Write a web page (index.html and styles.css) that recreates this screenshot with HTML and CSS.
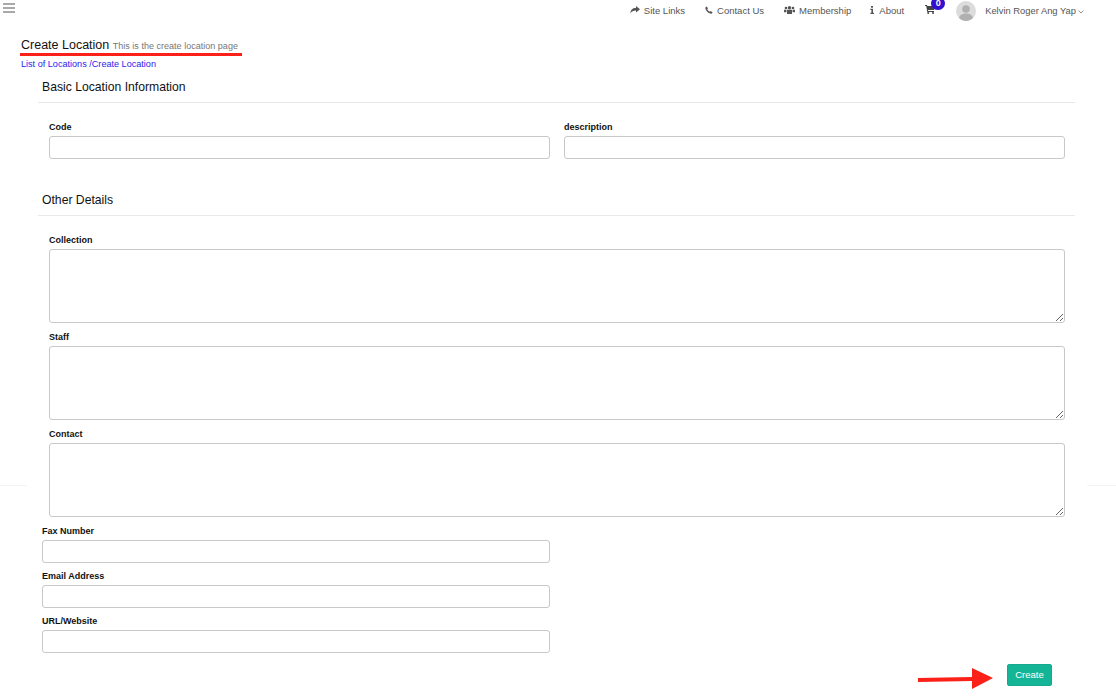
FILE: index.html
```html
<!DOCTYPE html>
<html lang="en">
<head>
<meta charset="utf-8">
<title>Create Location</title>
<link rel="stylesheet" href="styles.css">
</head>
<body>
<div class="edge-line"></div>
<header class="topbar">
  <svg class="burger" viewBox="0 0 12 10" width="12" height="10"><path d="M0 0h12v2H0zM0 4h12v2H0zM0 8h12v2H0z" fill="#a9a9a9"/></svg>
  <nav class="topnav">
    <a class="navitem"><svg class="ico" viewBox="0 0 10 8" width="10" height="8"><path d="M6 0l4 3.2L6 6.4V4.4C3.4 4.4 1.6 5 .4 7.6.4 4 2.4 2 6 2z" fill="#555"/></svg>Site Links</a>
    <a class="navitem"><svg class="ico" viewBox="0 0 8 8" width="8" height="8"><path d="M1.6.4L3 2.2 2.2 3.2C2.7 4.3 3.6 5.2 4.8 5.8L5.8 5 7.6 6.4C7.2 7.3 6.4 7.8 5.6 7.6 3 7 1 5 .4 2.4.3 1.500.8.800 1.600.4z" fill="#555"/></svg>Contact Us</a>
    <a class="navitem"><svg class="ico" viewBox="0 0 11 8" width="11" height="8"><g fill="#555"><circle cx="2" cy="2" r="1.300"/><circle cx="9" cy="2" r="1.300"/><circle cx="5.500" cy="1.700" r="1.700"/><path d="M0 3.800h2.400v2.400H0zM8.600 3.800H11v2.400H8.600zM3 3.800h5v4.200H3z"/></g></svg>Membership</a>
    <a class="navitem navitem-about"><svg class="ico" viewBox="0 0 4 8" width="4" height="8"><path d="M1 0h2v1.800H1zM.4 2.800H3v4h1V8H.4V6.800h1v-2.800h-1z" fill="#555"/></svg>About</a>
    <a class="cart"><svg viewBox="0 0 10 9" width="10" height="9"><path d="M0 0h2l.3 1H10L9 5H3l.2 1H9v1H2.300L1.200 1H0z" fill="#444"/><circle cx="3.200" cy="8" r="1" fill="#444"/><circle cx="8" cy="8" r="1" fill="#444"/></svg><span class="badge">0</span></a>
    <a class="user">
      <svg class="avatar" viewBox="0 0 20 20" width="20" height="20"><circle cx="10" cy="10" r="10" fill="#dcdcdc"/><circle cx="10" cy="8" r="3.800" fill="#b0b0b0"/><path d="M3 17c1-3.500 4-4.500 7-4.500s6 1 7 4.500c-2 2-4.500 3-7 3s-5-1-7-3z" fill="#b0b0b0"/></svg>
      <span class="user-name">Kelvin Roger Ang Yap</span>
      <svg class="caret" viewBox="0 0 6 4" width="6" height="4"><path d="M.5.5L3 3 5.500.5" fill="none" stroke="#777" stroke-width="0.800"/></svg>
    </a>
  </nav>
</header>

<main class="page">
  <div class="heading">
    <h1 class="title">Create Location <small class="subtitle">This is the create location page</small></h1>
    <div class="mark-line"></div>
    <p class="crumbs"><a>List of Locations</a> /<a>Create Location</a></p>
  </div>

  <form class="form">
    <section class="section">
      <h2 class="section-title">Basic Location Information</h2>
      <div class="grid-2">
        <div class="field"><label>Code</label><input type="text"></div>
        <div class="field"><label>description</label><input type="text"></div>
      </div>
    </section>

    <section class="section section-other">
      <h2 class="section-title">Other Details</h2>
      <div class="stack">
        <div class="field"><label>Collection</label><textarea></textarea></div>
        <div class="field"><label>Staff</label><textarea></textarea></div>
        <div class="field"><label>Contact</label><textarea></textarea></div>
      </div>
    </section>

    <div class="contact-fields">
      <div class="field"><label>Fax Number</label><input type="text"></div>
      <div class="field"><label>Email Address</label><input type="text"></div>
      <div class="field"><label>URL/Website</label><input type="text"></div>
    </div>

    <div class="actions">
      <svg class="arrow" viewBox="0 0 76 21" width="76" height="21"><path d="M0 10L54 9V0L75 10 54 21V13L0 14z" fill="#fb2018"/></svg>
      <button class="btn" type="button">Create</button>
    </div>
  </form>
</main>
</body>
</html>
```
FILE: styles.css
```css
* { box-sizing: border-box; }
html, body { margin: 0; padding: 0; }
body {
  position: relative;
  background: #fff;
  color: #111;
  font-family: "Liberation Sans", Arial, sans-serif;
  height: 699px;
  overflow: hidden;
}
.edge-line {
  position: absolute;
  left: 0;
  right: 0;
  top: 485px;
  height: 1px;
  background: linear-gradient(to right, #f3f3f3 27px, #fff 27px, #fff 1087px, #f3f3f3 1087px);
}
.topbar {
  display: flex;
  justify-content: space-between;
  height: 22px;
  position: relative;
}
.burger { margin: 3px 0 0 3px; }
.topnav {
  display: flex;
  align-items: flex-start;
  padding-right: 32px;
  font-size: 9.400px;
  color: #555;
}
.navitem {
  display: flex;
  align-items: center;
  gap: 4px;
  margin-right: 20px;
  height: 20px;
  font-size: 9.500px;
  white-space: nowrap;
}
.navitem-about { gap: 5px; margin-right: 21px; margin-left: -1px; }
.cart {
  position: relative;
  display: block;
  width: 10px;
  margin: 5px 21px 0 0;
}
.badge {
  position: absolute;
  left: 6px;
  top: -8px;
  width: 14px;
  height: 13px;
  border-radius: 7px;
  background: #3311cc;
  color: #fff;
  font-size: 9px;
  font-weight: bold;
  line-height: 13px;
  text-align: center;
}
.user { display: flex; align-items: center; height: 22px; white-space: nowrap; }
.avatar { margin-right: 9px; }
.user-name { padding-bottom: 2px; }
.caret { margin-left: 2px; margin-top: 1px; }
.page { position: relative; }
.heading { padding: 0 0 0 21px; }
.title {
  margin: 16px 0 0;
  font-size: 12.500px;
  font-weight: normal;
  line-height: 14px;
  color: #111;
}
.subtitle { font-size: 9.050px; color: #777; }
.mark-line {
  height: 3px;
  width: 222px;
  margin: 0 0 0 -1px;
  background: #fb2018;
}
.crumbs { margin: 3px 0 -1px; font-size: 9.100px; line-height: 11px; color: #2b22ee; }
.form { margin: 0 41px 0 38px; position: relative; background: #fff; }
.section-title {
  margin: 0;
  padding: 11px 0 8px 4px;
  font-size: 12.200px;
  font-weight: normal;
  line-height: 14px;
  color: #111;
  border-bottom: 1px solid #e8e8e8;
  height: 34px;
}
.section-other { margin-top: 23px; }
.grid-2 {
  display: grid;
  grid-template-columns: 1fr 1fr;
  column-gap: 14px;
  padding: 18px 10px 0 11px;
}
.stack { display: flex; flex-direction: column; padding: 18px 10px 0 11px; }
.field { display: flex; flex-direction: column; }
.field label {
  font-size: 9px;
  font-weight: bold;
  line-height: 12px;
  margin-bottom: 3px;
  color: #111;
}
.field input, .field textarea {
  display: block;
  width: 100%;
  margin: 0;
  border: 1px solid #c8c8c8;
  border-radius: 3px;
  background: #fff;
  outline: none;
}
.field input { height: 23px; padding: 0 6px; }
.field textarea { height: 74px; padding: 6px; resize: vertical; }
.stack .field + .field { margin-top: 8px; }
.contact-fields {
  display: flex;
  flex-direction: column;
  gap: 7px;
  width: 512px;
  padding: 8px 0 0 4px;
}
.actions {
  display: flex;
  justify-content: flex-end;
  padding: 11px 23px 0 0;
  position: relative;
}
.arrow { position: absolute; left: 880px; top: 15px; }
.btn {
  width: 45px;
  height: 22px;
  padding: 0 0 2px;
  border: 1px solid #17a98f;
  border-radius: 2px;
  background: #14b597;
  color: #fff;
  font-family: inherit;
  font-size: 9.500px;
  font-weight: normal;
}
```
